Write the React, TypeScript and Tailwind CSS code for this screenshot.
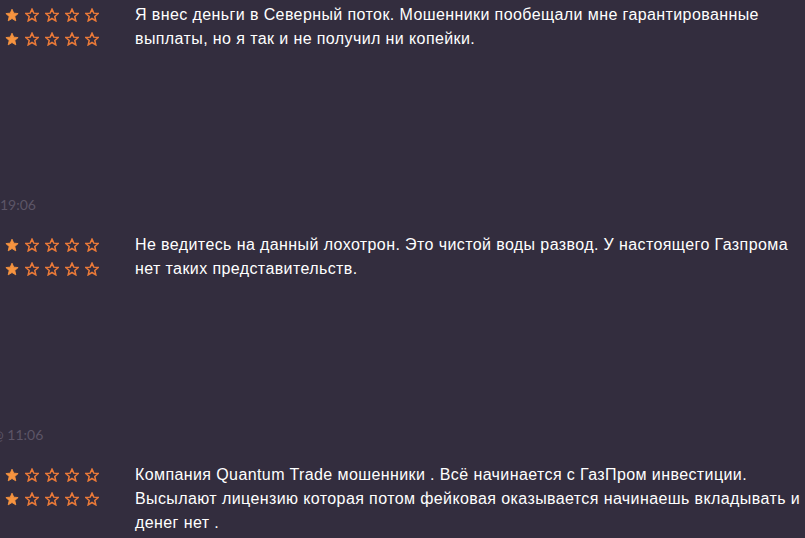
import React from "react";

type Review = { text: string; time: string; shift: string };

const reviews: Review[] = [
  {
    text: "Я внес деньги в Северный поток. Мошенники пообещали мне гарантированные выплаты, но я так и не получил ни копейки.",
    time: "19:06",
    shift: "ml-0",
  },
  {
    text: "Не ведитесь на данный лохотрон. Это чистой воды развод. У настоящего Газпрома нет таких представительств.",
    time: "@ 11:06",
    shift: "-ml-[8px]",
  },
  {
    text: "Компания Quantum Trade мошенники . Всё начинается с ГазПром инвестиции. Высылают лицензию которая потом фейковая оказывается начинаешь вкладывать и денег нет .",
    time: "",
    shift: "",
  },
];

function Star({ filled }: { filled: boolean }) {
  return (
    <svg width="14" height="14" viewBox="0 0 24 24" className="shrink-0">
      <polygon
        points="12,2 15,8.8 22.5,9.5 16.8,14.5 18.5,22 12,18 5.5,22 7.2,14.5 1.5,9.5 9,8.8"
        fill={filled ? "#f7943f" : "none"}
        stroke={filled ? "#f7943f" : "#ec7a38"}
        strokeWidth={filled ? 1.5 : 2.6}
      />
    </svg>
  );
}

function StarRow() {
  return (
    <div className="flex items-center gap-[6px] h-6 pl-[5px]">
      {[0, 1, 2, 3, 4].map(i => (
        <Star key={i} filled={i === 0} />
      ))}
    </div>
  );
}

export default function App() {
  return (
    <div className="w-[805px] h-[538px] overflow-hidden bg-[#332d3e] pt-[3px]">
      {reviews.map((r, idx) => (
        <div key={idx} className="mb-[18px]">
          <div className="flex min-h-[192px]">
            <div className="w-[135px] shrink-0">
              <StarRow />
              <StarRow />
            </div>
            <p className="flex-1 text-[16px] leading-6 text-white font-['Liberation_Sans',Arial,sans-serif] tracking-[0.4px]">
              {r.text}
            </p>
          </div>
          {r.time && (
            <div className={`h-5 leading-5 text-[14px] text-[#5c5567] font-['Lato',sans-serif] whitespace-nowrap ${r.shift}`}>
              {r.time}
            </div>
          )}
        </div>
      ))}
    </div>
  );
}
